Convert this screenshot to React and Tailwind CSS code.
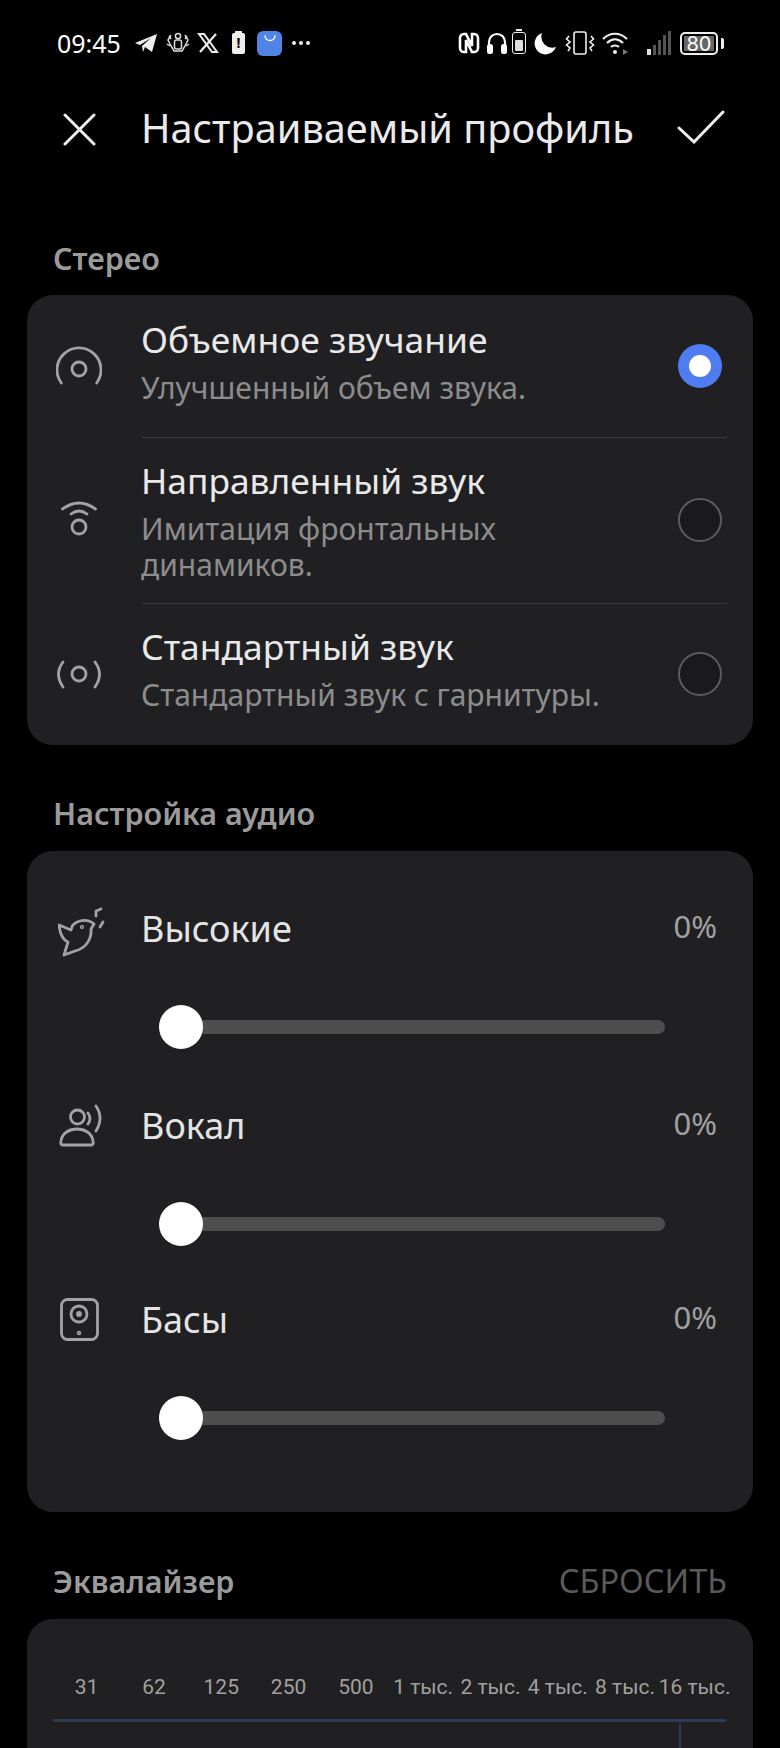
import React from "react";

const StatusBar = () => (
  <div className="h-[60px] pt-[26px] pl-[57px] pr-[56px] flex items-center justify-between text-white">
    <div className="flex items-center">
      <span className="text-[25px] leading-none w-[69px]">09:45</span>
      <svg width="24" height="22" viewBox="0 0 24 22" className="ml-[8px]" fill="#eee">
        <path d="M1 11 L23 2 L18 20 L11 15 L9 20 L8 14 L17 6 L6 13 Z" />
      </svg>
      <svg width="26" height="26" viewBox="0 0 26 26" className="ml-[7px]" fill="none" stroke="#ddd" strokeWidth="1.5">
        <circle cx="13" cy="6" r="2.6" />
        <rect x="9.5" y="10" width="7" height="9" rx="2" />
        <path d="M6 5 L3 10 L6 16 L9 21 H17 L20 16 L23 10 L20 5" />
        <path d="M2 14 L5 16 M24 14 L21 16 M4 6 L6 9 M22 6 L20 9" />
      </svg>
      <svg width="22" height="22" viewBox="0 0 22 22" className="ml-[6px]" fill="none" stroke="#eee">
        <path d="M2 2 H7 L20 20 H15 Z" strokeWidth="2" />
        <path d="M19 2 L3 20" strokeWidth="2.2" />
      </svg>
      <div className="ml-[13px] relative w-[13px] h-[21px] bg-[#eee] rounded-[2px] flex items-center justify-center">
        <div className="absolute -top-[2px] left-[3px] w-[7px] h-[2px] bg-[#eee]" />
        <span className="text-[14px] font-bold leading-none text-black">!</span>
      </div>
      <div className="ml-[12px] w-[25px] h-[25px] rounded-[6px] bg-[#4f86e6] flex justify-center">
        <svg width="16" height="10" viewBox="0 0 16 10" fill="none" stroke="#fff" strokeWidth="1.4" className="mt-[4px]">
          <path d="M3 1 C4 7 12 7 13 1" strokeLinecap="round" />
        </svg>
      </div>
      <span className="ml-[10px] flex gap-[3px]">
        <i className="w-[4px] h-[4px] rounded-full bg-[#eee]" />
        <i className="w-[4px] h-[4px] rounded-full bg-[#eee]" />
        <i className="w-[4px] h-[4px] rounded-full bg-[#eee]" />
      </span>
    </div>
    <div className="flex items-center">
      <svg width="22" height="22" viewBox="0 0 22 22" fill="none" stroke="#fff" strokeWidth="2.6">
        <path d="M7 2 H6 A4 4 0 0 0 2 6 V16 A4 4 0 0 0 6 20 H8 V8 L14 20 H16 A4 4 0 0 0 20 16 V6 A4 4 0 0 0 16 2 H14 V14 L8 2 Z" />
      </svg>
      <svg width="22" height="24" viewBox="0 0 22 24" className="ml-[6px]" fill="none" stroke="#fff" strokeWidth="2.2">
        <path d="M3 16 V11 A8 8 0 0 1 19 11 V16" />
        <rect x="1" y="13" width="6" height="10" rx="2.5" fill="#fff" stroke="none" />
        <rect x="15" y="13" width="6" height="10" rx="2.5" fill="#fff" stroke="none" />
      </svg>
      <div className="ml-[4px] relative w-[14px] h-[22px] border-[1.5px] border-[#eee] rounded-[3px] p-[2px] flex flex-col">
        <div className="absolute -top-[4px] left-[3px] w-[6px] h-[2px] bg-[#eee]" />
        <div className="mt-[5px] flex-1 bg-[#ddd] rounded-[1px]" />
      </div>
      <svg width="24" height="24" viewBox="0 0 24 24" className="ml-[7px]" fill="#fff">
        <path d="M9 2 A11 11 0 1 0 23 16 A11 11 0 0 1 9 2 Z" />
      </svg>
      <svg width="30" height="26" viewBox="0 0 30 26" className="ml-[8px]" fill="none" stroke="#eee" strokeWidth="1.6">
        <rect x="9" y="2" width="12" height="22" rx="2" />
        <path d="M4 6 L1.5 9 L5 12 L1.5 15 L5 18 L3 21 M26 6 L28.5 9 L25 12 L28.5 15 L25 18 L27 21" />
      </svg>
      <svg width="28" height="24" viewBox="0 0 28 24" className="ml-[6px]" fill="none" stroke="#eee" strokeWidth="2.2">
        <path d="M2 8 C9 1 19 1 26 8 M6 12 C11 7 17 7 22 12 M10 16 C12 14 16 14 18 16" />
        <circle cx="14" cy="21" r="2" fill="#eee" stroke="none" />
        <path d="M22 18 L27 21 L22 24 Z" fill="#777" stroke="none" />
      </svg>
      <div className="ml-[18px] flex items-end gap-[2px] h-[24px]">
        <i className="w-[4px] h-[6px] bg-[#ddd]" />
        <i className="w-[3px] h-[10px] bg-[#555]" />
        <i className="w-[3px] h-[15px] bg-[#555]" />
        <i className="w-[3px] h-[20px] bg-[#555]" />
        <i className="w-[3px] h-[24px] bg-[#555]" />
      </div>
      <div className="ml-[9px] w-[38px] h-[23px] border-2 border-[#eee] rounded-[5px] p-[2px] flex">
        <div className="flex-1 bg-[#666] rounded-[1px] text-[20px] leading-[16px] text-center text-white font-['Inter',sans-serif]">80</div>
      </div>
      <div className="ml-[3px] w-[3px] h-[11px] bg-[#eee] rounded-r-[2px]" />
    </div>
  </div>
);

const Header = () => (
  <div className="h-[138px] pl-[63px] pr-[55px] flex items-center text-[#eaeaea]">
    <svg width="33" height="33" viewBox="0 0 33 33" fill="none" stroke="#eee" strokeWidth="3" strokeLinecap="round">
      <path d="M2 2 L31 31 M31 2 L2 31" />
    </svg>
    <div className="ml-[45px] flex-1 text-[39.7px] leading-none whitespace-nowrap">Настраиваемый профиль</div>
    <svg width="48" height="34" viewBox="0 0 48 34" className="-mt-[4px]" fill="none" stroke="#eee" strokeWidth="3" strokeLinecap="round">
      <path d="M2 18 L17 32 L46 2" />
    </svg>
  </div>
);

const SectionTitle = ({ children, className }) => (
  <div className={"pl-[53px] text-[30.5px] leading-none font-semibold text-[#9b9b9b] " + className}>{children}</div>
);

const Radio = ({ on }) =>
  on ? (
    <div className="w-[44px] h-[44px] rounded-full bg-[#4f7cf0] flex items-center justify-center">
      <div className="w-[22px] h-[22px] rounded-full bg-white" />
    </div>
  ) : (
    <div className="w-[44px] h-[44px] rounded-full border-2 border-[#5c5c5c] bg-[#1a1a1c]" />
  );

const StereoRow = ({ icon, title, desc, on, className, textClass }) => (
  <div className={"flex items-center " + className}>
    <div className="w-[114px] pl-[29px] flex items-center shrink-0">{icon}</div>
    <div className={"flex-1 min-w-0 " + textClass}>
      <div className="text-[35.4px] leading-[46px] text-[#e9e9e9] whitespace-nowrap">{title}</div>
      <div className="mt-[8px] text-[30px] leading-[36px] text-[#8c8c8c] max-w-[470px]">{desc}</div>
    </div>
    <div className="pr-[31px]"><Radio on={on} /></div>
  </div>
);

const Ic = ({ children, size = 46 }) => (
  <svg width={size} height={size} viewBox={`0 0 ${size} ${size}`} fill="none" stroke="#a3a3a3" strokeWidth="2.8" strokeLinecap="round" strokeLinejoin="round">
    {children}
  </svg>
);

const AudioRow = ({ icon, label, className }) => (
  <div className={className}>
    <div className="flex items-center h-[46px]">
      <div className="w-[114px] pl-[28px] shrink-0">{icon}</div>
      <div className="flex-1 text-[36px] leading-none text-[#e4e4e4]">{label}</div>
      <div className="pr-[36px] text-[31px] leading-none text-[#a0a0a0] -mt-[6px]">0%</div>
    </div>
    <div className="mt-[53px] ml-[132px] mr-[88px] h-[44px] flex items-center relative">
      <div className="w-full h-[14px] rounded-full bg-[#4e4e4e]" />
      <div className="absolute left-0 top-0 w-[44px] h-[44px] rounded-full bg-white" />
    </div>
  </div>
);

const bands = ["31", "62", "125", "250", "500", "1 тыс.", "2 тыс.", "4 тыс.", "8 тыс.", "16 тыс."];

export default function App() {
  return (
    <div className="w-[780px] h-[1748px] overflow-hidden bg-black font-['Noto_Sans','Roboto',sans-serif]">
      <StatusBar />
      <Header />
      <SectionTitle className="mt-[45px]">Стерео</SectionTitle>
      <div className="mx-[27px] mt-[21px] h-[450px] rounded-[26px] bg-[#202022] flex flex-col">
        <StereoRow
          className="h-[142px]"
          textClass="pb-[10px]"
          on
          title="Объемное звучание"
          desc="Улучшенный объем звука."
          icon={
            <Ic>
              <circle cx="23" cy="26" r="7" />
              <path d="M5.3 40 A22 22 0 1 1 40.7 40" />
            </Ic>
          }
        />
        <div className="ml-[115px] mr-[26px] h-px bg-[#3a3a3a]" />
        <StereoRow
          className="h-[165px]"
          title="Направленный звук"
          desc="Имитация фронтальных динамиков."
          icon={
            <Ic>
              <circle cx="23" cy="30" r="7" />
              <path d="M6.5 12 Q23 0 39.5 12 M15 17 Q23 11 31 17" />
            </Ic>
          }
        />
        <div className="ml-[115px] mr-[26px] h-px bg-[#3a3a3a]" />
        <StereoRow
          className="flex-1"
          textClass="pb-[12px]"
          title="Стандартный звук"
          desc="Стандартный звук с гарнитуры."
          icon={
            <Ic>
              <circle cx="23" cy="23" r="7" />
              <path d="M7 11 Q-2 23 7 36 M39 11 Q48 23 39 36" />
            </Ic>
          }
        />
      </div>
      <SectionTitle className="mt-[53px]">Настройка аудио</SectionTitle>
      <div className="mx-[27px] mt-[23px] h-[661px] rounded-[26px] bg-[#202022] pt-[55px]">
        <AudioRow
          label="Высокие"
          icon={
            <div className="mt-[6px] ml-[3px]">
              <Ic size={50}>
                <path d="M36 17 L33 22 C34 34 26 42 17 44 L6 48 L10 35 C5 33 2 27 1 18 L13 23 C14 14 28 10 36 17 Z" />
                <circle cx="24" cy="20" r="0.7" />
                <path d="M43 2 L38 4 L38 9 M45 15 L42 20" />
              </Ic>
            </div>
          }
        />
        <AudioRow
          className="mt-[54px]"
          label="Вокал"
          icon={
            <div className="ml-[1px]">
              <Ic>
                <circle cx="21.5" cy="14" r="7" />
                <path d="M7 42 H35 Q38 42 37 38 C35 22 7 22 5 38 Q4 42 7 42 Z" />
                <path d="M32 10 Q36 15.5 32 21 M40 3 Q48 15 40 28" />
              </Ic>
            </div>
          }
        />
        <AudioRow
          className="mt-[51px]"
          label="Басы"
          icon={
            <Ic>
              <rect x="6.5" y="2.5" width="36" height="40" rx="6" />
              <circle cx="24" cy="17" r="8" />
              <circle cx="24" cy="17" r="1.5" />
              <circle cx="24" cy="36" r="0.8" />
            </Ic>
          }
        />
      </div>
      <div className="mt-[53px] pl-[53px] pr-[53px] flex items-center justify-between">
        <div className="text-[30.5px] leading-[32px] font-semibold text-[#9b9b9b]">Эквалайзер</div>
        <div className="text-[32.5px] leading-[32px] text-[#5a5a5a]">СБРОСИТЬ</div>
      </div>
      <div className="mx-[27px] mt-[22px] h-[200px] rounded-t-[26px] bg-[#202022] pl-[26px] pr-[27px] pt-[58px] relative">
        <div className="grid grid-cols-10 text-[21px] leading-none text-[#a0a0a0] font-['Roboto',sans-serif]">
          {bands.map((b) => (
            <div key={b} className="min-w-0 text-center whitespace-nowrap">{b}</div>
          ))}
        </div>
        <div className="mt-[21px] h-[3px] bg-[#2e3a55]" />
        <div className="absolute left-[652px] top-[104px] w-[2px] h-[40px] bg-[#2e3a55]" />
      </div>
    </div>
  );
}
